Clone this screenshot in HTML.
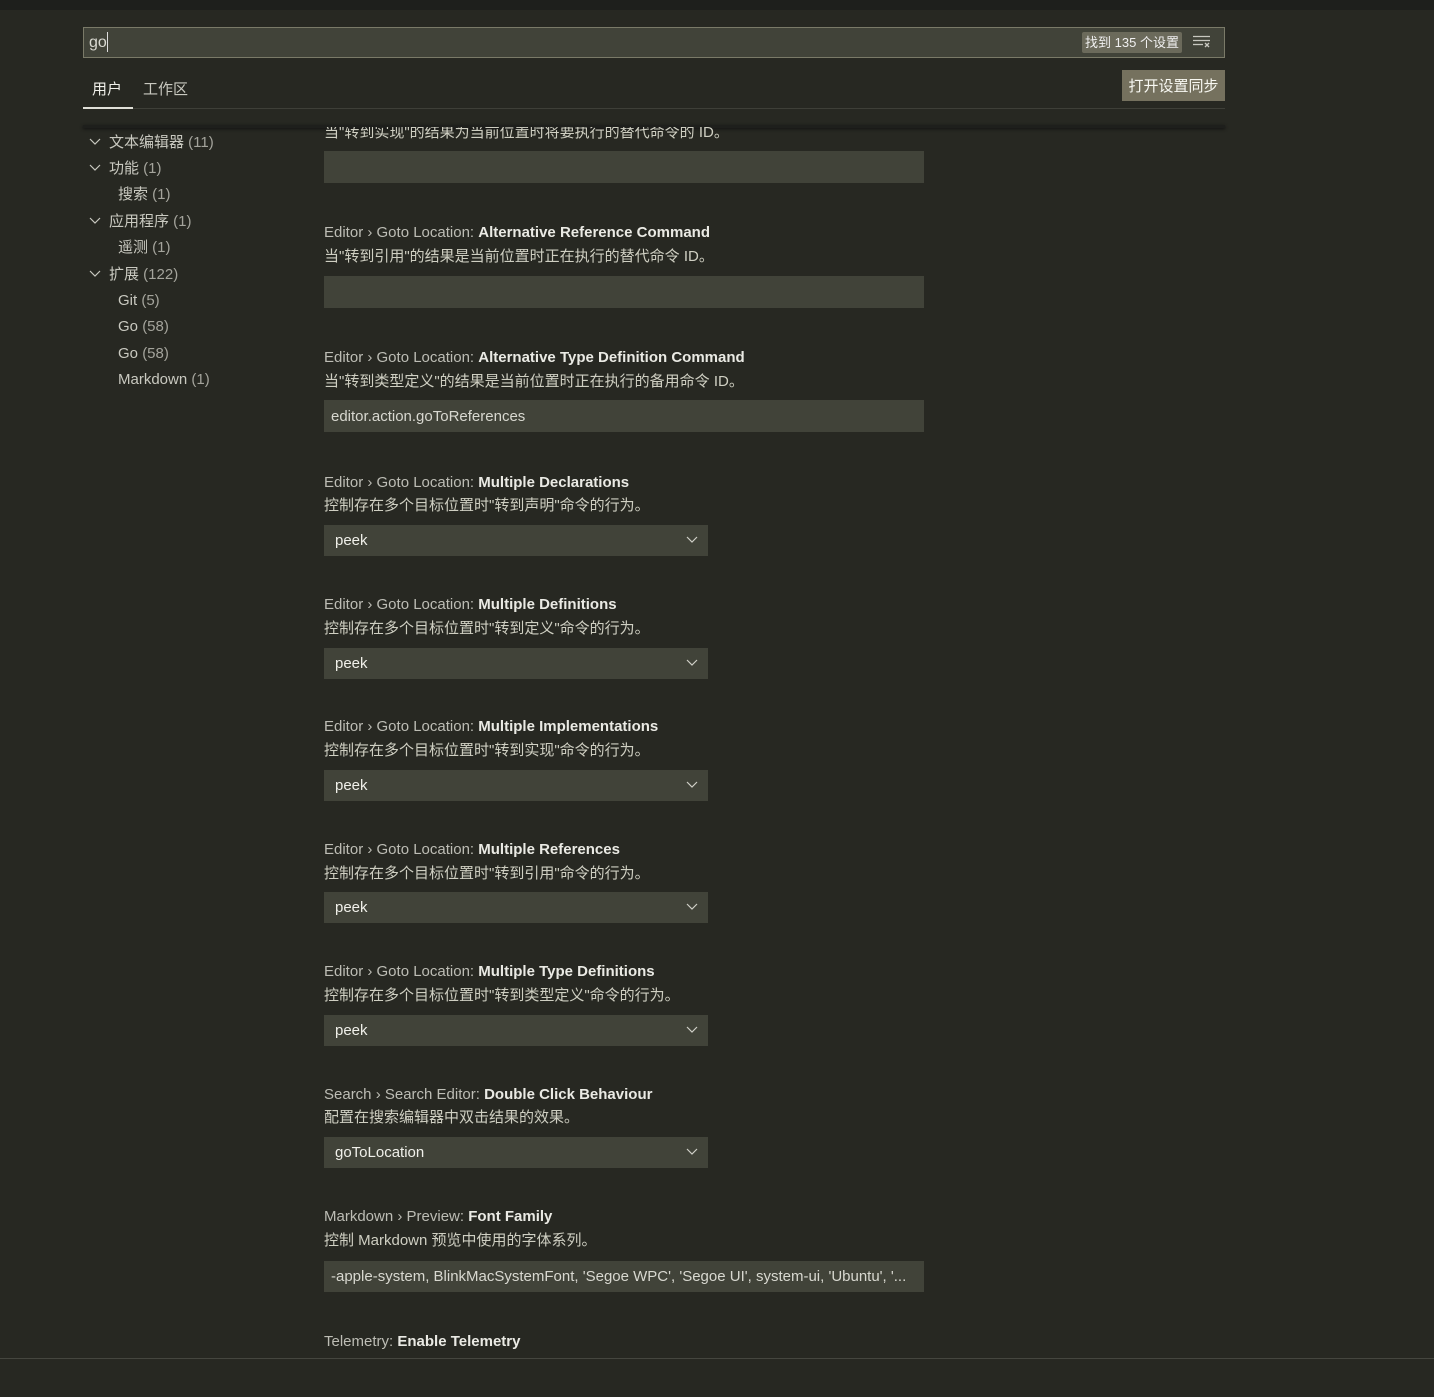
<!DOCTYPE html>
<html><head><meta charset="utf-8"><style>
*{margin:0;padding:0;box-sizing:border-box}
body{width:1434px;height:1397px;background:#272822;position:relative;overflow:hidden;font-family:"Liberation Sans","Noto Sans CJK SC",sans-serif;font-size:15px;color:#cfcfc2}
.a{position:absolute;white-space:nowrap;line-height:20px}
.content .a{margin-top:2px}
.top{position:absolute;left:0;top:0;width:1434px;height:10px;background:#1e1f1c}
.search{position:absolute;left:83px;top:27px;width:1142px;height:31px;background:#414339;border:1px solid #7a7a68}
.badge{position:absolute;left:1082px;top:32px;width:100px;height:21px;background:#6b6a5b;border-radius:2px;color:#f0f0f0;font-size:13px;line-height:22px;text-align:center}
.btn{position:absolute;left:1122px;top:70px;width:103px;height:31px;background:#75715e;color:#f8f8f2;font-size:15px;line-height:33px;text-align:center}
.content{position:absolute;left:0;top:127px;width:1434px;height:1231px;overflow:hidden}
.s .p{color:#bdbdb5}
.s b{color:#eaeae4;font-weight:bold}
.s{font-size:15px}
.inp{position:absolute;left:324px;width:600px;height:32px;background:#414339;color:#d8d8d0;line-height:33px;padding-left:7px;font-size:15px;white-space:nowrap}
.sel{position:absolute;left:324px;width:384px;height:31px;background:#414339;color:#f0f0ea;line-height:32px;padding-left:11px;font-size:15px}
.sel svg{position:absolute;right:10px;top:11px}
.side{color:#c9c9c0;font-size:15px}
.side span{color:#a4a49c}
.chev{position:absolute;left:89px;margin-top:2px}
</style></head><body>
<div class="top"></div>
<div class="search"><span class="a" style="left:5px;top:5px;color:#d8d8d0;font-size:16px">go</span><span style="position:absolute;left:23px;top:4px;width:1px;height:20px;background:#ddd"></span></div>
<div class="badge">找到 135 个设置</div>
<svg style="position:absolute;left:1192px;top:35px" width="20" height="14"><g stroke="#c8c8c0" stroke-width="1.3"><line x1="1" y1="1.5" x2="18" y2="1.5"/><line x1="1" y1="5.5" x2="18" y2="5.5"/><line x1="1" y1="9.5" x2="11" y2="9.5"/><line x1="13" y1="8" x2="17" y2="12"/><line x1="17" y1="8" x2="13" y2="12"/></g></svg>
<div class="a" style="left:92px;top:80px;color:#f0f0ea;font-size:15px">用户</div>
<div class="a" style="left:143px;top:80px;color:#c9c9c0;font-size:15px">工作区</div>
<div style="position:absolute;left:83px;top:108px;width:1142px;height:1px;background:#3e3f38"></div>
<div style="position:absolute;left:83px;top:107px;width:50px;height:2px;background:#e0e0d8"></div>
<div class="btn">打开设置同步</div>
<div style="position:absolute;left:83px;top:125px;width:1142px;height:3px;background:#1e1f1c;box-shadow:0 1px 3px #111"></div>

<div class="content">
<div style="position:relative;top:-127px">
<svg class="chev" style="top:136px" width="12" height="8"><path d="M1 1l5 5 5-5" stroke="#c9c9c0" fill="none" stroke-width="1.2"/></svg>
<div class="a side" style="left:109px;top:131px">文本编辑器 <span>(11)</span></div>
<svg class="chev" style="top:162px" width="12" height="8"><path d="M1 1l5 5 5-5" stroke="#c9c9c0" fill="none" stroke-width="1.2"/></svg>
<div class="a side" style="left:109px;top:157px">功能 <span>(1)</span></div>
<div class="a side" style="left:118px;top:183px">搜索 <span>(1)</span></div>
<svg class="chev" style="top:215px" width="12" height="8"><path d="M1 1l5 5 5-5" stroke="#c9c9c0" fill="none" stroke-width="1.2"/></svg>
<div class="a side" style="left:109px;top:210px">应用程序 <span>(1)</span></div>
<div class="a side" style="left:118px;top:236px">遥测 <span>(1)</span></div>
<svg class="chev" style="top:268px" width="12" height="8"><path d="M1 1l5 5 5-5" stroke="#c9c9c0" fill="none" stroke-width="1.2"/></svg>
<div class="a side" style="left:109px;top:263px">扩展 <span>(122)</span></div>
<div class="a side" style="left:118px;top:289px">Git <span>(5)</span></div>
<div class="a side" style="left:118px;top:315px">Go <span>(58)</span></div>
<div class="a side" style="left:118px;top:342px">Go <span>(58)</span></div>
<div class="a side" style="left:118px;top:368px">Markdown <span>(1)</span></div>

<div class="a s" style="left:324px;top:121px">当"转到实现"的结果为当前位置时将要执行的替代命令的 ID。</div>
<div class="inp" style="top:151px"></div>

<div class="a s" style="left:324px;top:221px"><span class="p">Editor › Goto Location: </span><b>Alternative Reference Command</b></div>
<div class="a s" style="left:324px;top:245px">当"转到引用"的结果是当前位置时正在执行的替代命令 ID。</div>
<div class="inp" style="top:276px"></div>

<div class="a s" style="left:324px;top:346px"><span class="p">Editor › Goto Location: </span><b>Alternative Type Definition Command</b></div>
<div class="a s" style="left:324px;top:370px">当"转到类型定义"的结果是当前位置时正在执行的备用命令 ID。</div>
<div class="inp" style="top:400px">editor.action.goToReferences</div>

<div class="a s" style="left:324px;top:471px"><span class="p">Editor › Goto Location: </span><b>Multiple Declarations</b></div>
<div class="a s" style="left:324px;top:494px">控制存在多个目标位置时"转到声明"命令的行为。</div>
<div class="sel" style="top:525px">peek<svg width="12" height="8"><path d="M1 1l5 5 5-5" stroke="#d0d0c8" fill="none" stroke-width="1.2"/></svg></div>

<div class="a s" style="left:324px;top:593px"><span class="p">Editor › Goto Location: </span><b>Multiple Definitions</b></div>
<div class="a s" style="left:324px;top:617px">控制存在多个目标位置时"转到定义"命令的行为。</div>
<div class="sel" style="top:648px">peek<svg width="12" height="8"><path d="M1 1l5 5 5-5" stroke="#d0d0c8" fill="none" stroke-width="1.2"/></svg></div>

<div class="a s" style="left:324px;top:715px"><span class="p">Editor › Goto Location: </span><b>Multiple Implementations</b></div>
<div class="a s" style="left:324px;top:739px">控制存在多个目标位置时"转到实现"命令的行为。</div>
<div class="sel" style="top:770px">peek<svg width="12" height="8"><path d="M1 1l5 5 5-5" stroke="#d0d0c8" fill="none" stroke-width="1.2"/></svg></div>

<div class="a s" style="left:324px;top:838px"><span class="p">Editor › Goto Location: </span><b>Multiple References</b></div>
<div class="a s" style="left:324px;top:862px">控制存在多个目标位置时"转到引用"命令的行为。</div>
<div class="sel" style="top:892px">peek<svg width="12" height="8"><path d="M1 1l5 5 5-5" stroke="#d0d0c8" fill="none" stroke-width="1.2"/></svg></div>

<div class="a s" style="left:324px;top:960px"><span class="p">Editor › Goto Location: </span><b>Multiple Type Definitions</b></div>
<div class="a s" style="left:324px;top:984px">控制存在多个目标位置时"转到类型定义"命令的行为。</div>
<div class="sel" style="top:1015px">peek<svg width="12" height="8"><path d="M1 1l5 5 5-5" stroke="#d0d0c8" fill="none" stroke-width="1.2"/></svg></div>

<div class="a s" style="left:324px;top:1083px"><span class="p">Search › Search Editor: </span><b>Double Click Behaviour</b></div>
<div class="a s" style="left:324px;top:1106px">配置在搜索编辑器中双击结果的效果。</div>
<div class="sel" style="top:1137px">goToLocation<svg width="12" height="8"><path d="M1 1l5 5 5-5" stroke="#d0d0c8" fill="none" stroke-width="1.2"/></svg></div>

<div class="a s" style="left:324px;top:1205px"><span class="p">Markdown › Preview: </span><b>Font Family</b></div>
<div class="a s" style="left:324px;top:1229px">控制 Markdown 预览中使用的字体系列。</div>
<div class="inp" style="top:1261px;height:31px;line-height:32px;font-size:15px;overflow:hidden">-apple-system, BlinkMacSystemFont, 'Segoe WPC', 'Segoe UI', system-ui, 'Ubuntu', '...</div>

<div class="a s" style="left:324px;top:1330px"><span class="p">Telemetry: </span><b>Enable Telemetry</b></div>
</div>
</div>
<div style="position:absolute;left:0;top:1358px;width:1434px;height:1px;background:#45463f"></div>
</body></html>
